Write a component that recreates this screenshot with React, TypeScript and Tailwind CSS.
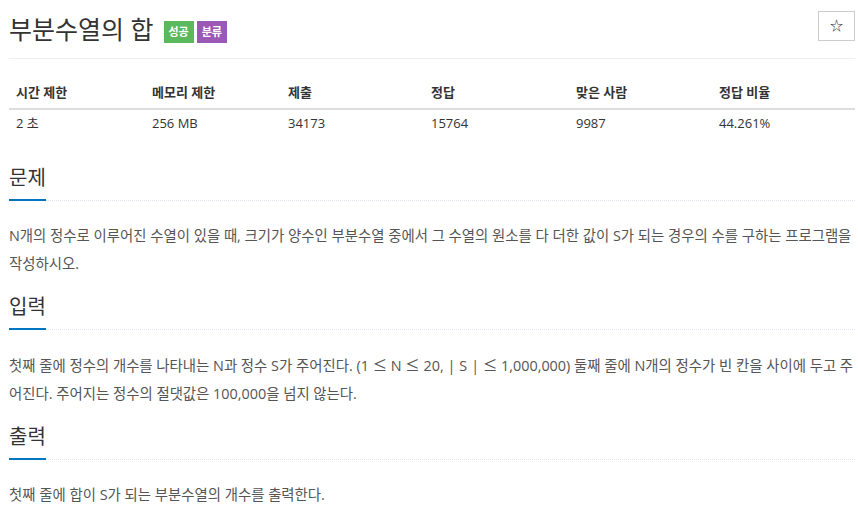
import React from 'react';

const stats = [
  { label: '시간 제한', value: '2 초', w: 'w-[136px]' },
  { label: '메모리 제한', value: '256 MB', w: 'w-[136px]' },
  { label: '제출', value: '34173', w: 'w-[143px]' },
  { label: '정답', value: '15764', w: 'w-[145px]' },
  { label: '맞은 사람', value: '9987', w: 'w-[143px]' },
  { label: '정답 비율', value: '44.261%', w: 'flex-1' },
];

const cjk = { fontFamily: '"Noto Sans CJK KR", sans-serif' };

const Section = ({ title, first, children }: { title: string; first?: boolean; children: React.ReactNode }) => (
  <section className={first ? 'mt-[20px]' : 'mt-[12px]'}>
    <div className="border-b border-dotted border-[#dde3ea]">
      <h2 className="text-[20px] leading-[30px] text-[#333] pt-[2px] pb-[6px] inline-block border-b-2 border-[#0076c0] -mb-px">
        {title}
      </h2>
    </div>
    <div className="mt-[21px] text-[14.4px] leading-[28px] text-[#555]">{children}</div>
  </section>
);

export default function App() {
  return (
    <div
      className="w-[858px] h-[517px] bg-white overflow-hidden pl-[9px] pr-[3px] pt-[10px]"
      style={{ fontFamily: '"Open Sans", "Noto Sans CJK KR", sans-serif' }}
    >
      <div className="flex items-start justify-between border-b border-[#eee] pb-[12px]">
        <div className="flex items-center pt-[2px]">
          <h1 className="text-[25px] leading-[34px] text-[#333] font-normal">부분수열의 합</h1>
          <span className="ml-[10px] mt-[6px] bg-[#5cb85c] text-white text-[11px] font-bold leading-[22px] px-[5px]">성공</span>
          <span className="ml-[3px] mt-[6px] bg-[#9b59b6] text-white text-[11px] font-bold leading-[22px] px-[5px]">분류</span>
        </div>
        <button className="mt-[1px] w-[37px] h-[30px] border border-[#ccc] flex items-center justify-center text-[#333] text-[13px]">
          ☆
        </button>
      </div>

      <div className="mt-[15px]">
        <div className="flex border-b-2 border-[#ddd] text-[13px] font-bold text-[#333] leading-[20px] pt-[8px] pb-[6px]">
          {stats.map((s) => (
            <div key={s.label} className={`${s.w} px-[7px]`}>{s.label}</div>
          ))}
        </div>
        <div className="flex text-[13px] text-[#333] leading-[20px] pt-[3px] pb-[8px]">
          {stats.map((s) => (
            <div key={s.label} className={`${s.w} px-[7px]`}>{s.value}</div>
          ))}
        </div>
      </div>

      <Section title="문제" first>
        <p>
          N개의 정수로 이루어진 수열이 있을 때, 크기가 양수인 부분수열 중에서 그 수열의 원소를 다 더한 값이 S가 되는 경우의 수를 구하는 프로그램을 작성하시오.
        </p>
      </Section>

      <Section title="입력">
        <p>
          첫째 줄에 정수의 개수를 나타내는 N과 정수 S가 주어진다. (1 <span style={cjk}>≤</span> N <span style={cjk}>≤</span> 20, |<span className="px-[4px]">S</span>| <span style={cjk}>≤</span> 1,000,000) 둘째 줄에 N개의 정수가 빈 칸을 사이에 두고 주어진다. 주어지는 정수의 절댓값은 100,000을 넘지 않는다.
        </p>
      </Section>

      <Section title="출력">
        <p>첫째 줄에 합이 S가 되는 부분수열의 개수를 출력한다.</p>
      </Section>
    </div>
  );
}
